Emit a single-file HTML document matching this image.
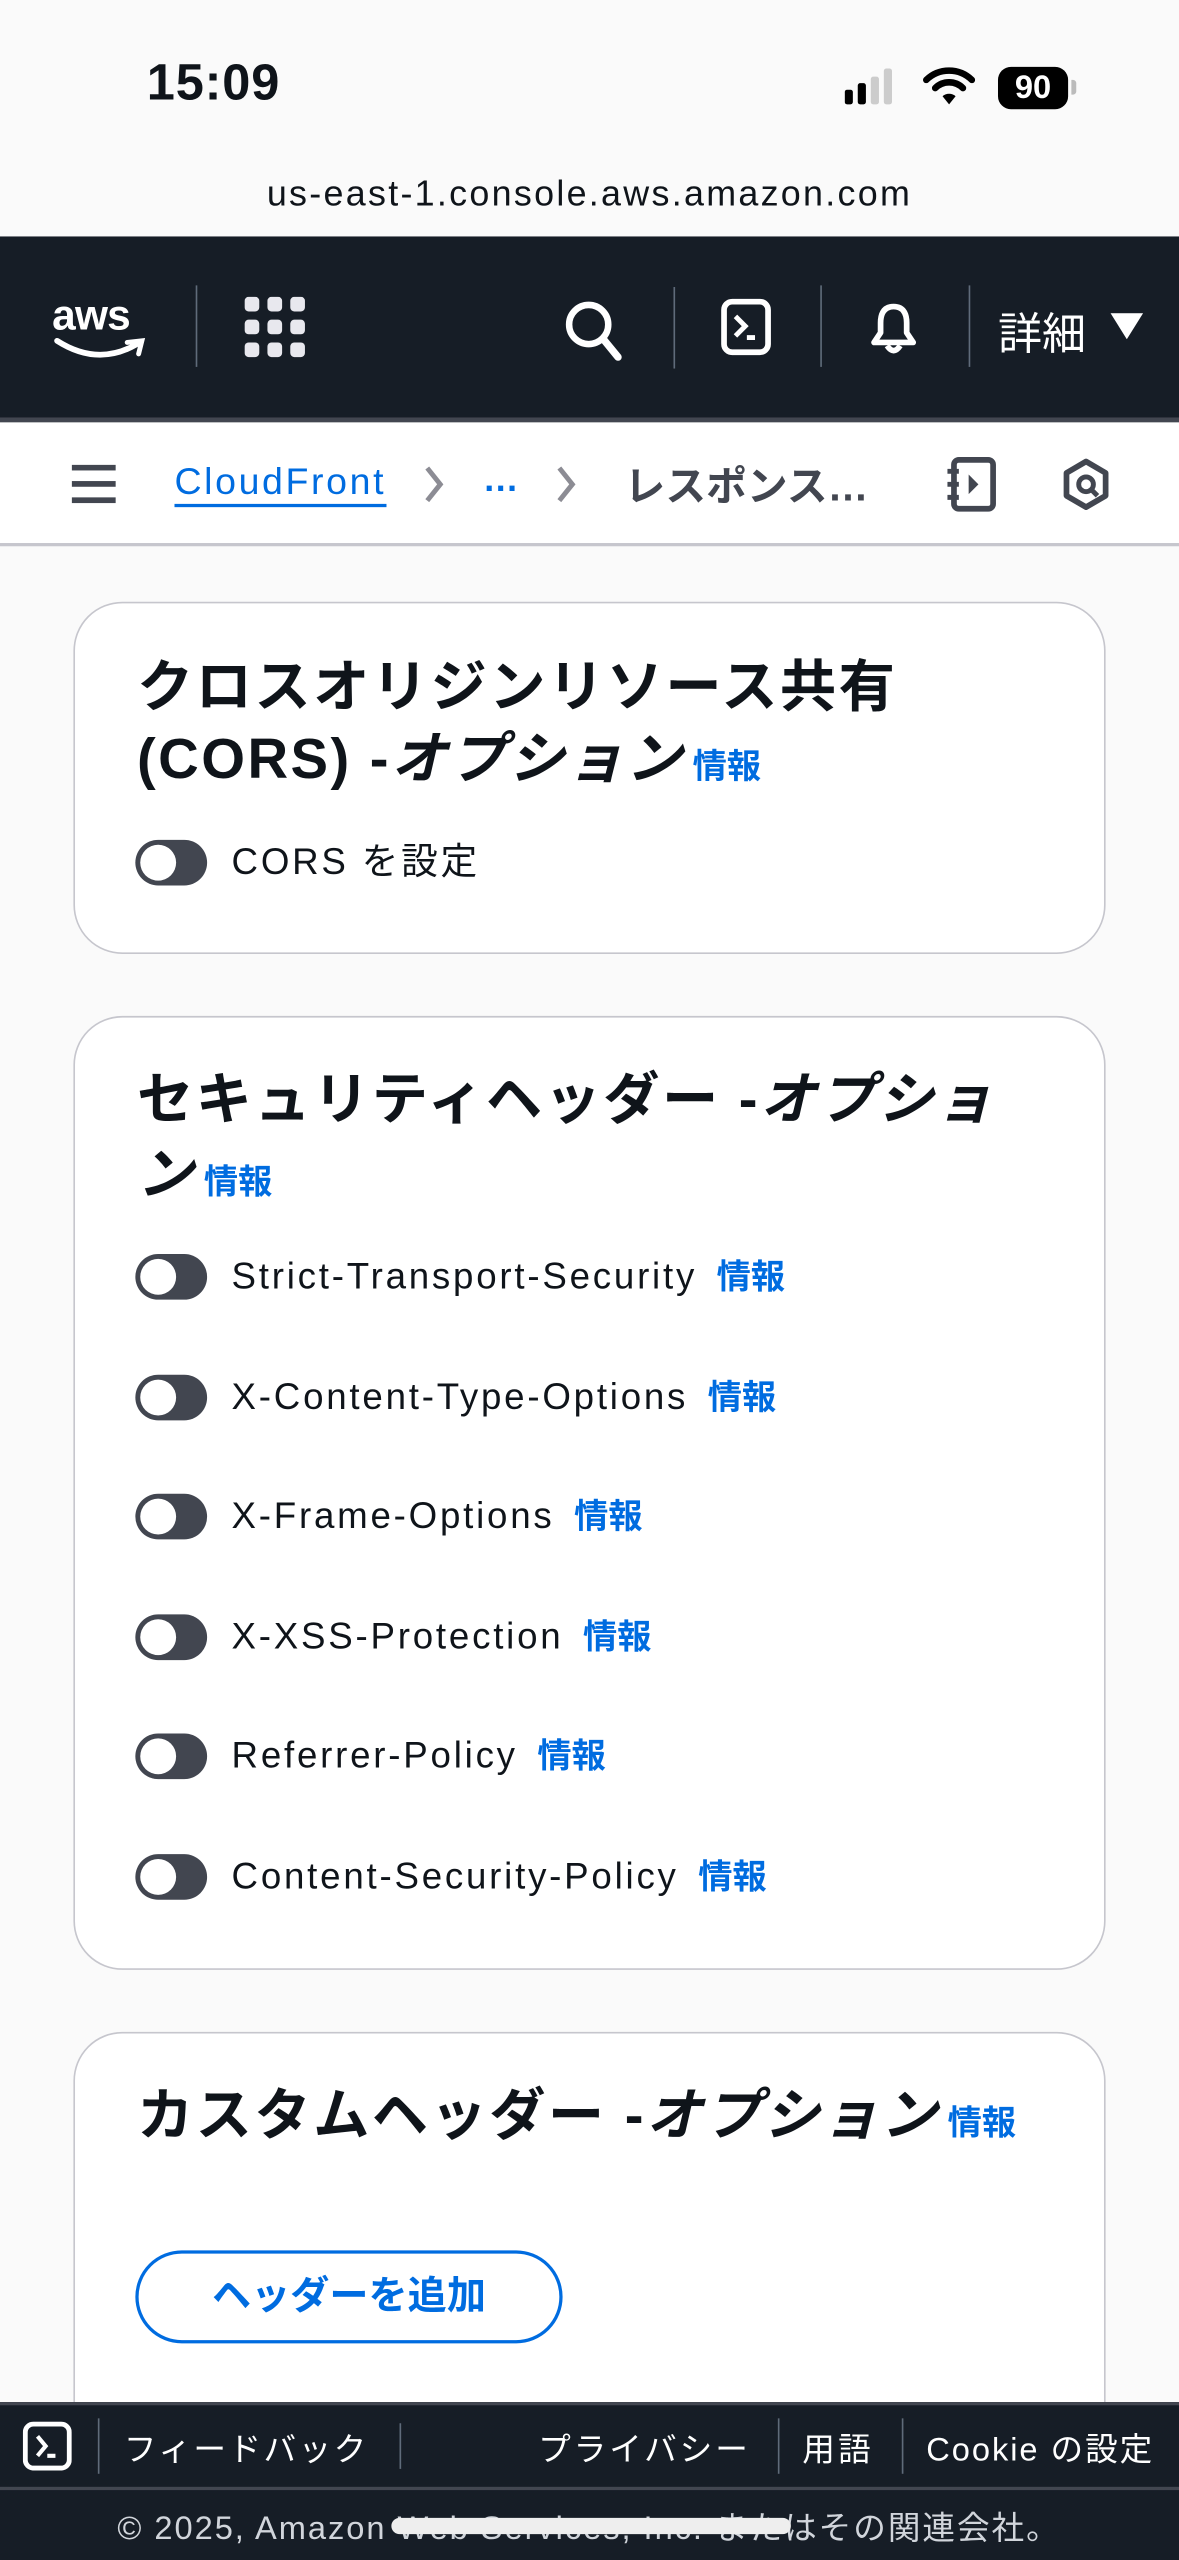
<!DOCTYPE html>
<html><head><meta charset="utf-8">
<style>
html,body{margin:0;padding:0;width:1179px;height:2556px;overflow:hidden;background:#fafafa;}
#w{position:absolute;left:0;top:0;width:723px;height:1568px;transform:scale(1.63071);transform-origin:0 0;font-family:"Liberation Sans","Noto Sans CJK JP",sans-serif;color:#0f141a;}
.a{position:absolute;white-space:nowrap;}
.card{position:absolute;left:45px;width:631px;background:#fff;border:1.5px solid #c6c6cd;border-radius:30px;}
.t{position:absolute;left:84px;font-size:34.5px;font-weight:bold;line-height:44px;white-space:nowrap;color:#0f141a;letter-spacing:1.5px;}
.t i{font-style:italic;}
.info{color:#006ce0;font-size:21px;font-weight:bold;margin-left:5px;letter-spacing:0;}
.tg{position:absolute;left:83px;width:44px;height:28px;border-radius:14px;background:#424650;}
.tg:after{content:"";position:absolute;left:3px;top:3px;width:22px;height:22px;border-radius:50%;background:#fff;}
.lb{position:absolute;left:142px;font-size:22.5px;line-height:28px;white-space:nowrap;color:#0f141a;letter-spacing:1.7px;}
.lb b{color:#006ce0;font-size:21px;margin-left:12px;letter-spacing:0;}
.sep{position:absolute;width:1px;background:#5f6b7a;}
.f{position:absolute;top:1486px;color:#fff;font-size:20px;white-space:nowrap;letter-spacing:0.8px;}
</style></head><body><div id="w">
<div class="a" style="left:90px;top:33px;font-size:31px;font-weight:bold;letter-spacing:0.5px;">15:09</div>
<svg class="a" style="left:518px;top:42px" width="38" height="24">
<rect x="0" y="13" width="5" height="9" rx="1.5" fill="#000"/><rect x="8" y="9" width="5" height="13" rx="1.5" fill="#000"/>
<rect x="16" y="5" width="5" height="17" rx="1.5" fill="#ccc"/><rect x="24" y="0" width="5" height="22" rx="1.5" fill="#ccc"/></svg>
<svg class="a" style="left:566px;top:40px" width="32" height="26" viewBox="0 0 32 26">
<path d="M2 9 A20 20 0 0 1 30 9" stroke="#000" stroke-width="4" fill="none" stroke-linecap="round"/>
<path d="M7.5 14 A12 12 0 0 1 24.5 14" stroke="#000" stroke-width="4" fill="none" stroke-linecap="round"/>
<path d="M12 19 L16 24 L20 19 A6 6 0 0 0 12 19Z" fill="#000"/></svg>
<div class="a" style="left:612px;top:41px;width:43px;height:26px;border-radius:8px;background:#000;color:#fff;font-size:20px;font-weight:bold;text-align:center;line-height:26px;">90</div>
<div class="a" style="left:657px;top:49px;width:3px;height:9px;background:#bbb;border-radius:0 2px 2px 0;"></div>
<div class="a" style="left:0;width:723px;top:106px;text-align:center;font-size:22px;letter-spacing:1.4px;">us-east-1.console.aws.amazon.com</div>
<div class="a" style="left:0;top:145px;width:723px;height:111px;background:#161d26;border-bottom:3px solid #424650;"></div>
<div class="a" style="left:32px;top:178px;color:#fff;font-size:26px;font-weight:bold;letter-spacing:-0.5px;">aws</div>
<svg class="a" style="left:32px;top:205px" width="60" height="20"><path d="M3 4 Q28 20 52 6" stroke="#fff" stroke-width="3.5" fill="none" stroke-linecap="round"/><path d="M46 5 L55 4 L53 12" stroke="#fff" stroke-width="3" fill="none" stroke-linecap="round"/></svg>
<div class="sep" style="left:120px;top:175px;height:50px;"></div>
<svg class="a" style="left:150px;top:182px" width="38" height="38"><g fill="#e8e8ee">
<rect x="0" y="0" width="9" height="9" rx="2.5"/><rect x="14" y="0" width="9" height="9" rx="2.5"/><rect x="28" y="0" width="9" height="9" rx="2.5"/>
<rect x="0" y="14" width="9" height="9" rx="2.5"/><rect x="14" y="14" width="9" height="9" rx="2.5"/><rect x="28" y="14" width="9" height="9" rx="2.5"/>
<rect x="0" y="28" width="9" height="9" rx="2.5"/><rect x="14" y="28" width="9" height="9" rx="2.5"/><rect x="28" y="28" width="9" height="9" rx="2.5"/></g></svg>
<svg class="a" style="left:346px;top:183px" width="38" height="40"><circle cx="15" cy="16" r="12" stroke="#fff" stroke-width="4" fill="none"/><path d="M24 25 L33 36" stroke="#fff" stroke-width="4.5" stroke-linecap="round"/></svg>
<div class="sep" style="left:413px;top:176px;height:50px;"></div>
<svg class="a" style="left:442px;top:183px" width="32" height="36"><rect x="2" y="2" width="27" height="31" rx="5" stroke="#fff" stroke-width="3.5" fill="none"/><path d="M9 11 L15 17 L9 23 M16 24 H21" stroke="#fff" stroke-width="3" fill="none"/></svg>
<div class="sep" style="left:503px;top:175px;height:50px;"></div>
<svg class="a" style="left:533px;top:184px" width="30" height="36"><path d="M15 4 C8 4 7 10 7 14 V20 L3 26 H27 L23 20 V14 C23 10 22 4 15 4Z" stroke="#fff" stroke-width="3.5" fill="none" stroke-linejoin="round"/><path d="M11 28 Q15 34 19 28" stroke="#fff" stroke-width="3.5" fill="none"/></svg>
<div class="sep" style="left:594px;top:175px;height:50px;"></div>
<div class="a" style="left:612px;top:183px;color:#fff;font-size:27px;">詳細</div>
<svg class="a" style="left:681px;top:192px" width="20" height="16"><path d="M0 0 H20 L10 16Z" fill="#fff"/></svg>
<div class="a" style="left:0;top:259px;width:723px;height:74px;background:#fff;border-bottom:2px solid #c6c6cd;"></div>
<svg class="a" style="left:44px;top:285px" width="27" height="24"><g fill="#424650"><rect y="0" width="27" height="3.5"/><rect y="10" width="27" height="3.5"/><rect y="20" width="27" height="3.5"/></g></svg>
<div class="a" style="left:107px;top:282px;color:#006ce0;font-size:23px;border-bottom:2.5px solid #006ce0;line-height:27px;letter-spacing:1.6px;">CloudFront</div>
<svg class="a" style="left:258px;top:284px" width="16" height="26"><path d="M4 3 L12 13 L4 23" stroke="#8c8c94" stroke-width="3" fill="none"/></svg>
<div class="a" style="left:296px;top:281px;color:#006ce0;font-size:22px;font-weight:bold;">…</div>
<svg class="a" style="left:339px;top:284px" width="16" height="26"><path d="M4 3 L12 13 L4 23" stroke="#8c8c94" stroke-width="3" fill="none"/></svg>
<div class="a" style="left:383px;top:279px;color:#424650;font-size:25px;font-weight:bold;">レスポンス…</div>
<svg class="a" style="left:579px;top:279px" width="36" height="36"><rect x="6" y="3" width="24" height="30" rx="3" stroke="#424650" stroke-width="3.5" fill="none"/><path d="M2 10 H9 M2 18 H9 M2 26 H9" stroke="#424650" stroke-width="3"/><path d="M15 12 L21 18 L15 24Z" fill="#424650"/></svg>
<svg class="a" style="left:650px;top:280px" width="32" height="34"><path d="M16 3 L28 10 V24 L16 31 L4 24 V10Z" stroke="#424650" stroke-width="3.5" fill="none" stroke-linejoin="round"/><circle cx="16" cy="17" r="4.5" stroke="#424650" stroke-width="3" fill="none"/><path d="M19 20 L23 24" stroke="#424650" stroke-width="3"/></svg>
<div class="card" style="top:369px;height:214px;"></div>
<div class="t" style="top:400px;">クロスオリジンリソース共有</div>
<div class="t" style="top:444px;">(CORS) -<i>オプション</i><span class="info">情報</span></div>
<div class="tg" style="top:515px;"></div>
<div class="lb" style="top:515px;">CORS を設定</div>
<div class="card" style="top:623px;height:583px;"></div>
<div class="t" style="top:653px;">セキュリティヘッダー -<i>オプショ</i></div>
<div class="t" style="top:699px;"><i>ン</i><span class="info">情報</span></div>
<div class="tg" style="top:769px;"></div><div class="lb" style="top:769px;">Strict-Transport-Security<b>情報</b></div>
<div class="tg" style="top:843px;"></div><div class="lb" style="top:843px;">X-Content-Type-Options<b>情報</b></div>
<div class="tg" style="top:916px;"></div><div class="lb" style="top:916px;">X-Frame-Options<b>情報</b></div>
<div class="tg" style="top:990px;"></div><div class="lb" style="top:990px;">X-XSS-Protection<b>情報</b></div>
<div class="tg" style="top:1063px;"></div><div class="lb" style="top:1063px;">Referrer-Policy<b>情報</b></div>
<div class="tg" style="top:1137px;"></div><div class="lb" style="top:1137px;">Content-Security-Policy<b>情報</b></div>
<div class="card" style="top:1246px;height:280px;"></div>
<div class="t" style="top:1276px;">カスタムヘッダー -<i>オプション</i><span class="info">情報</span></div>
<div class="a" style="left:83px;top:1380px;width:258px;height:53px;border:2.5px solid #006ce0;border-radius:30px;color:#006ce0;font-size:24px;font-weight:bold;text-align:center;line-height:53px;">ヘッダーを追加</div>
<div class="a" style="left:0;top:1473px;width:723px;height:95px;background:#161d26;border-top:2px solid #424650;"></div>
<div class="a" style="left:0;top:1525px;width:723px;height:2px;background:#424650;"></div>
<svg class="a" style="left:14px;top:1485px" width="30" height="30"><rect x="1.5" y="1.5" width="27" height="27" rx="5" stroke="#fff" stroke-width="3" fill="none"/><path d="M9 9 L14 15 L9 21 M15 21 H20" stroke="#fff" stroke-width="2.5" fill="none"/></svg>
<div class="sep" style="left:60px;top:1483px;height:34px;"></div>
<div class="f" style="left:76px;letter-spacing:1.5px;">フィードバック</div>
<div class="sep" style="left:245px;top:1486px;height:28px;"></div>
<div class="f" style="left:330px;letter-spacing:1.8px;">プライバシー</div>
<div class="sep" style="left:477px;top:1483px;height:34px;"></div>
<div class="f" style="left:492px;letter-spacing:2px;">用語</div>
<div class="sep" style="left:553px;top:1483px;height:34px;"></div>
<div class="f" style="left:568px;letter-spacing:1.2px;">Cookie の設定</div>
<div class="a" style="left:72px;top:1534px;color:#d1d5db;font-size:20px;letter-spacing:1.2px;">© 2025, Amazon Web Services, Inc. またはその関連会社。</div>
<div class="a" style="left:240px;top:1544px;width:245px;height:10px;border-radius:5px;background:#eee;"></div>
</div></body></html>
